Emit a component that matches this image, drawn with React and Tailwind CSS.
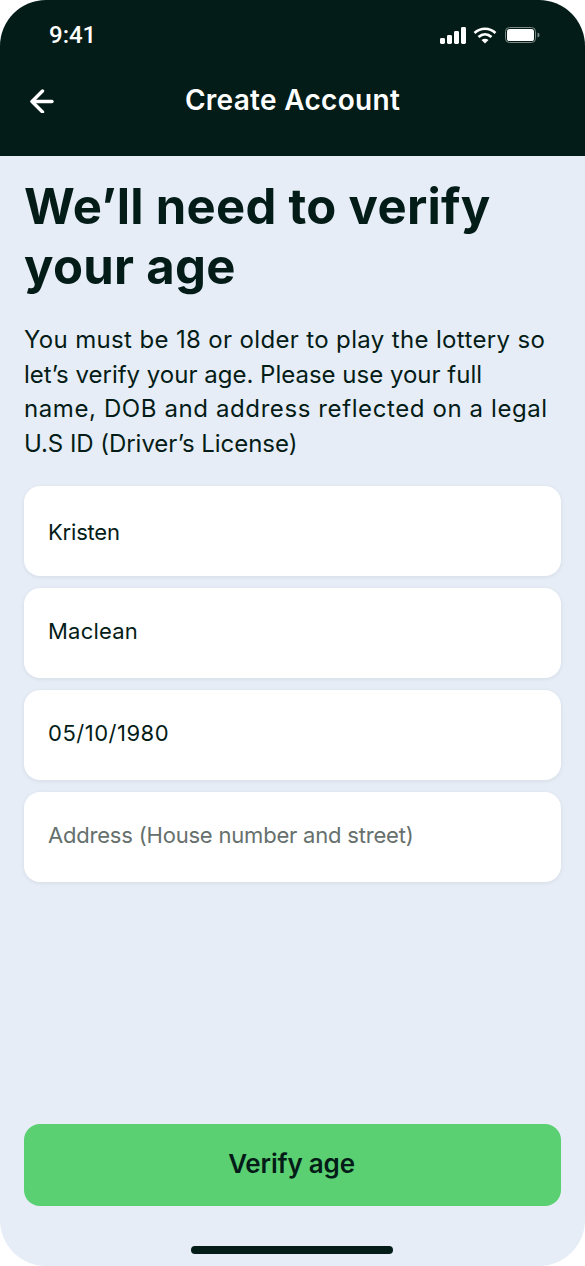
const fields = [
  { label: "Kristen", textClass: "text-[#041c17] tracking-[-0.2px] pt-[2px]" },
  { label: "Maclean", textClass: "text-[#041c17] tracking-[0.2px] pb-[3px]" },
  { label: "05/10/1980", textClass: "text-[#041c17] tracking-[0.5px] pb-[3px]" },
  { label: "Address (House number and street)", textClass: "text-[#66706d] tracking-[-0.2px] pb-[3px]" },
]

const StatusIcons = () => (
  <div className="flex items-center gap-[7px]">
    <svg width="26" height="17" viewBox="0 0 26 17" fill="white">
      <rect x="0" y="11" width="5" height="6" rx="1.4" />
      <rect x="7" y="8" width="5" height="9" rx="1.4" />
      <rect x="14" y="4" width="5" height="13" rx="1.4" />
      <rect x="21" y="0" width="5" height="17" rx="1.4" />
    </svg>
    <svg width="24" height="17" viewBox="0 0 24 17" fill="none" stroke="white" strokeWidth="2.6">
      <path d="M1.5 6 C7.5 0.3 16.5 0.3 22.5 6" />
      <path d="M5.5 10 C9.5 6.4 14.5 6.4 18.5 10" />
      <path d="M12 16.5 L8.5 13 C10.5 11.3 13.5 11.3 15.5 13 Z" fill="white" stroke="none" />
    </svg>
    <svg width="36" height="16" viewBox="0 0 36 16" className="ml-[1px]">
      <rect x="0.5" y="0.5" width="30" height="15" rx="4" fill="none" stroke="#7f8a87" />
      <rect x="2" y="2" width="27" height="12" rx="2.6" fill="white" />
      <path d="M32.5 5.5 C34 6 34.5 7 34.5 8 C34.5 9 34 10 32.5 10.5 Z" fill="#7f8a87" />
    </svg>
  </div>
)

export default function App() {
  return (
    <div className="w-[585px] h-[1266px] bg-white font-['Inter','Lato',sans-serif] overflow-hidden">
      <div className="flex flex-col h-full rounded-[46px] overflow-hidden bg-[#e6edf6]">
        {/* Header */}
        <div className="h-[156px] shrink-0 bg-[#041c17] text-white px-[30px]">
          <div className="flex items-center justify-between h-[68px] pl-[19px] pr-[14px] pt-[2px]">
            <span className="font-['Roboto',sans-serif] text-[24px] font-medium leading-none">9:41</span>
            <StatusIcons />
          </div>
          <div className="relative flex items-center justify-center h-[62px] pt-[2px]">
            <svg className="absolute left-0 top-[21px]" width="24" height="24" viewBox="0 0 24 24" fill="none" stroke="white" strokeWidth="3.4" strokeLinecap="round" strokeLinejoin="round">
              <path d="M22 12.5 H2.5" />
              <path d="M12.5 2 L2 12.5 L12.5 23" />
            </svg>
            <h1 className="text-[28px] font-semibold leading-none tracking-[0.3px]">Create Account</h1>
          </div>
        </div>

        {/* Body */}
        <div className="flex flex-col flex-1 px-[24px] pt-[21px] pb-[12px] text-[#041c17]">
          <h2 className="text-[49px] font-bold leading-[60px] tracking-[0.3px]">We’ll need to verify<br />your age</h2>
          <p className="mt-[26px] text-[24px] leading-[34.5px]">
            <span className="block tracking-[0.35px]">You must be 18 or older to play the lottery so</span>
            <span className="block tracking-[0px]">let’s verify your age. Please use your full</span>
            <span className="block tracking-[0.6px]">name, DOB and address reflected on a legal</span>
            <span className="block tracking-[-0.05px]">U.S ID (Driver’s License)</span>
          </p>
          <div className="flex flex-col gap-[12px] mt-[25px]">
            {fields.map(field => (
              <div
                key={field.label}
                className="flex items-center h-[90px] px-[24px] bg-white rounded-[16px] shadow-[0_1px_4px_rgba(4,28,23,0.08)]"
              >
                <span className={`text-[22px] ${field.textClass}`}>{field.label}</span>
              </div>
            ))}
          </div>
          <button
            type="button"
            className="mt-auto h-[82px] shrink-0 rounded-[16px] bg-[#5ad072] text-[26px] font-semibold tracking-[-0.2px] text-[#041c17] pb-[3px] pr-[2px]"
          >
            Verify age
          </button>
          <div className="shrink-0 w-[202px] h-[8px] mt-[40px] ml-[167px] rounded-full bg-[#041c17]" />
        </div>
      </div>
    </div>
  )
}
